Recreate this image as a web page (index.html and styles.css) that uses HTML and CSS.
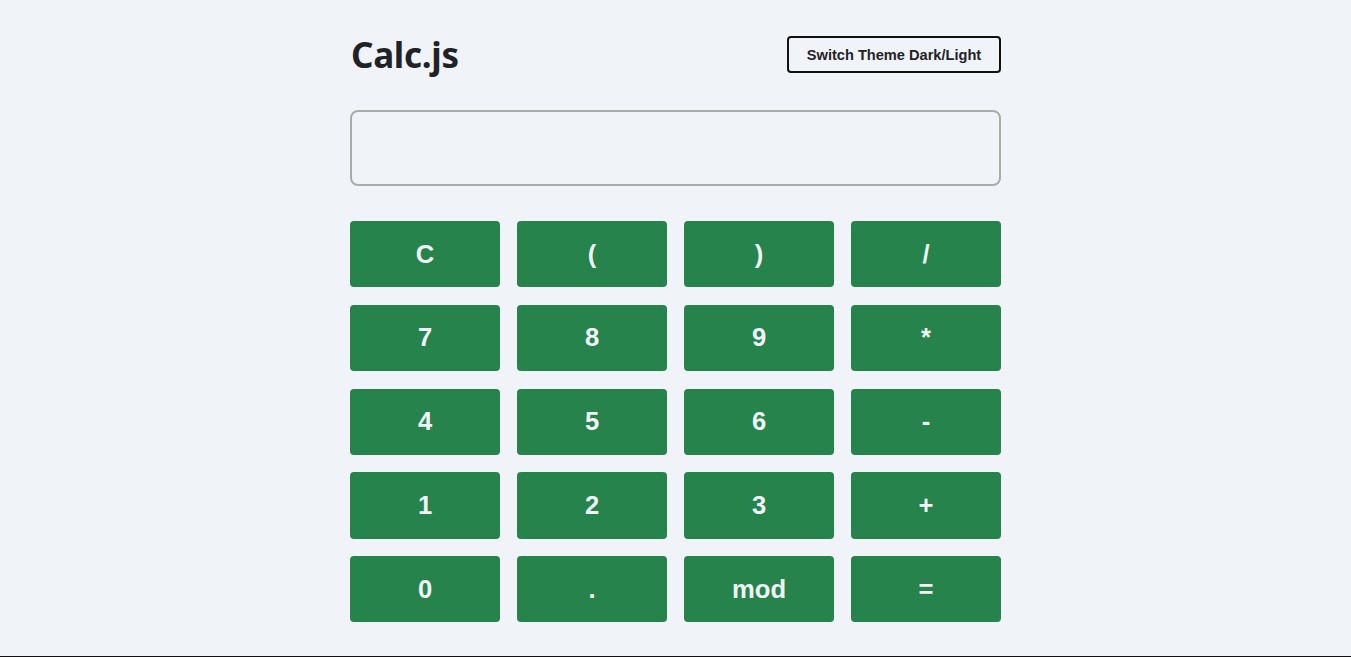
FILE: index.html
```html
<!DOCTYPE html>
<html lang="en">
<head>
<meta charset="utf-8">
<title>Calc.js</title>
<link rel="stylesheet" href="styles.css">
</head>
<body>
<main class="calc">
  <header class="calc-header">
    <h1 class="title">Calc.js</h1>
    <button class="theme-btn" type="button">Switch Theme Dark/Light</button>
  </header>
  <div class="display"></div>
  <div class="keys">
    <button class="key">C</button>
    <button class="key">(</button>
    <button class="key">)</button>
    <button class="key">/</button>
    <button class="key">7</button>
    <button class="key">8</button>
    <button class="key">9</button>
    <button class="key">*</button>
    <button class="key">4</button>
    <button class="key">5</button>
    <button class="key">6</button>
    <button class="key">-</button>
    <button class="key">1</button>
    <button class="key">2</button>
    <button class="key">3</button>
    <button class="key">+</button>
    <button class="key">0</button>
    <button class="key">.</button>
    <button class="key">mod</button>
    <button class="key">=</button>
  </div>
</main>
<footer class="page-footer"></footer>
</body>
</html>
```
FILE: styles.css
```css
* { box-sizing: border-box; }
html, body { margin: 0; padding: 0; }
body {
  background: #f0f4f8;
  min-height: 100vh;
  display: flex;
  flex-direction: column;
  font-family: "Liberation Sans", Arial, sans-serif;
  color: #1f2328;
}
.calc {
  width: 651px;
  margin: 0 auto;
  padding-top: 36px;
}
.calc-header {
  display: flex;
  justify-content: space-between;
  align-items: center;
  height: 37px;
}
.title {
  margin: 0;
  font-family: "Noto Sans", sans-serif;
  font-weight: 700;
  font-size: 35px;
  letter-spacing: -0.3px;
  line-height: 1;
  color: #1f2328;
  padding-left: 1px;
}
.theme-btn {
  height: 37px;
  width: 214px;
  border: 2px solid #111;
  border-radius: 4px;
  background: #f0f4f8;
  color: #1f2328;
  font-family: "Liberation Sans", Arial, sans-serif;
  font-weight: 700;
  font-size: 14.6px;
  padding: 0;
}
.display {
  margin-top: 37px;
  height: 76px;
  border: 2px solid #a9abad;
  border-radius: 8px;
  background: #f0f4f8;
}
.keys {
  margin-top: 35px;
  display: grid;
  grid-template-columns: repeat(4, 1fr);
  column-gap: 17px;
  row-gap: 17.6px;
}
.key {
  height: 66.2px;
  border: none;
  border-radius: 4px;
  background: #25834b;
  color: #f0f4f8;
  font-family: "Liberation Sans", Arial, sans-serif;
  font-weight: 700;
  font-size: 25.6px;
  padding: 0;
}
.page-footer {
  margin-top: auto;
  height: 1px;
  background: #111;
}
```
